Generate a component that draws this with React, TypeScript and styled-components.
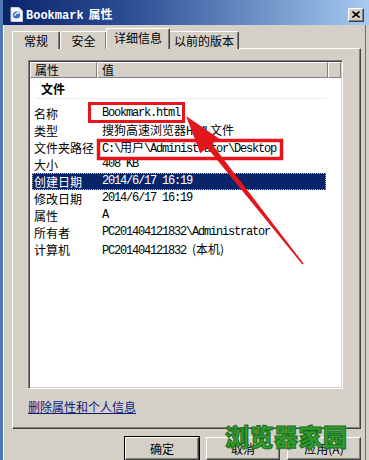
import React from "react";
import styled, { createGlobalStyle, css } from "styled-components";

const GlobalStyle = createGlobalStyle`
  html, body { margin: 0; padding: 0; background: #d4d0c8; }
  * { box-sizing: border-box; }
`;

const CJK = `"Noto Sans CJK SC", "Noto Sans CJK JP", sans-serif`;
const MONO = `"Liberation Mono", "Noto Sans CJK SC", monospace`;

const Frame = styled.div`
  position: relative;
  width: 369px;
  height: 460px;
  overflow: hidden;
  background: #d4d0c8;
  border-left: 3px solid #4e78b2;
  box-shadow: inset 1px 0 0 #ffffff, inset -3px 0 0 #d4d0c8, inset -4px 0 0 #6e6e6e;
  display: flex;
  flex-direction: column;
  font-family: ${CJK};
  font-size: 12px;
  color: #000;
`;

const TitleBar = styled.div`
  height: 27px;
  padding: 4px 5px 0 7px;
  display: flex;
  align-items: center;
  gap: 3px;
  background: linear-gradient(90deg, #0a246a 0%, #2c4f95 35%, #a6caf0 100%);
  color: #fff;
  position: relative;
  z-index: 1;
`;

const TitleText = styled.div`
  flex: 1;
  font-weight: bold;
  white-space: nowrap;
  line-height: 14px;
`;

const TitleLatin = styled.span`
  font-family: ${MONO};
  font-size: 12px;
  font-weight: bold;
`;

const TitleCjk = styled.span`
  font-family: ${CJK};
  font-size: 12px;
  font-weight: bold;
  margin-left: 5px;
`;

const CloseBtn = styled.div`
  width: 16px;
  height: 14px;
  background: #d4d0c8;
  border-top: 1px solid #fff;
  border-left: 1px solid #fff;
  border-right: 1px solid #404040;
  border-bottom: 1px solid #404040;
  box-shadow: inset -1px -1px 0 #808080;
  display: flex;
  align-items: center;
  justify-content: center;
`;

const Body = styled.div`
  flex: 1;
  display: flex;
  flex-direction: column;
  padding: 4px 8px 0 9px;
`;

const TabStrip = styled.div`
  height: 20px;
  display: flex;
  align-items: flex-end;
  position: relative;
  z-index: 1;
  margin-bottom: -1px;
`;

const Tab = styled.div<{ $active?: boolean; $w: number }>`
  width: ${(p) => p.$w}px;
  height: ${(p) => (p.$active ? 21 : 18)}px;
  margin-left: ${(p) => (p.$active ? -1 : 0)}px;
  margin-right: ${(p) => (p.$active ? -1 : 0)}px;
  background: #d4d0c8;
  border-top: 1px solid #fff;
  border-left: 1px solid #fff;
  border-right: 1px solid #404040;
  box-shadow: inset -1px 0 0 #808080;
  border-radius: 2px 2px 0 0;
  display: flex;
  align-items: center;
  justify-content: center;
  font-size: 12px;
  line-height: 14px;
  padding-bottom: ${(p) => (p.$active ? 3 : 0)}px;
  position: relative;
  z-index: ${(p) => (p.$active ? 2 : 1)};
`;

const Panel = styled.div`
  width: 349px;
  height: 381px;
  border-top: 1px solid #fff;
  border-left: 1px solid #fff;
  border-right: 1px solid #404040;
  border-bottom: 1px solid #404040;
  box-shadow: inset -1px -1px 0 #808080;
  padding: 11px 0 0 15px;
  display: flex;
  flex-direction: column;
`;

const ListBox = styled.div`
  width: 315px;
  height: 329px;
  background: #fff;
  border-top: 1px solid #808080;
  border-left: 1px solid #808080;
  border-right: 1px solid #fff;
  border-bottom: 1px solid #fff;
  box-shadow: inset 1px 1px 0 #404040, inset -1px -1px 0 #d4d0c8;
  padding: 1px;
  display: flex;
  flex-direction: column;
`;

const HeaderRow = styled.div`
  height: 16px;
  display: flex;
  background: #d4d0c8;
`;

const HeaderCell = styled.div<{ $w?: number }>`
  ${(p) =>
    p.$w
      ? css`
          width: ${p.$w}px;
        `
      : css`
          flex: 1;
        `}
  height: 16px;
  border-top: 1px solid #fff;
  border-left: 1px solid #fff;
  border-right: 1px solid #808080;
  border-bottom: 1px solid #808080;
  padding-left: 4px;
  font-size: 12px;
  line-height: 14px;
  white-space: nowrap;
`;

const GroupHeader = styled.div`
  height: 21px;
  margin: 0 14px 6px 5px;
  padding-left: 6px;
  display: flex;
  align-items: center;
  font-weight: bold;
  font-size: 12px;
  border-bottom: 1px solid #ecece8;
`;

const Row = styled.div<{ $selected?: boolean }>`
  width: 294px;
  height: 17px;
  margin-left: 2px;
  padding-left: 2px;
  display: flex;
  align-items: center;
  white-space: nowrap;
  ${(p) =>
    p.$selected &&
    css`
      background: #0a246a;
      color: #fff;
      outline: 1px dotted #c8b68a;
      outline-offset: -1px;
    `}
`;

const Label = styled.div`
  width: 68px;
  font-size: 12px;
  line-height: 17px;
`;

const Value = styled.div`
  font-family: ${MONO};
  font-size: 12px;
  letter-spacing: -1.2px;
  line-height: 17px;
`;

const Han = styled.span`
  font-family: ${CJK};
  font-size: 12px;
  letter-spacing: 0;
`;

const Link = styled.a`
  margin-top: 10px;
  width: fit-content;
  font-size: 12px;
  line-height: 16px;
  color: #0b1a7a;
  text-decoration: underline;
  cursor: pointer;
`;

const ButtonRow = styled.div`
  display: flex;
  justify-content: flex-end;
  gap: 7px;
  margin-top: 8px;
  width: 349px;
`;

const Button = styled.div`
  width: 74px;
  height: 23px;
  background: #d4d0c8;
  border-top: 1px solid #fff;
  border-left: 1px solid #fff;
  border-right: 1px solid #404040;
  border-bottom: 1px solid #404040;
  box-shadow: inset -1px -1px 0 #808080;
  display: flex;
  align-items: center;
  justify-content: center;
  font-size: 12px;
`;

const DefaultButton = styled(Button)`
  outline: 1px solid #000;
`;

const Overlay = styled.svg`
  position: absolute;
  left: -3px;
  top: 0;
  pointer-events: none;
`;

const Watermark = styled.div`
  position: absolute;
  left: 222px;
  top: 418px;
  font-family: ${CJK};
  font-size: 24px;
  font-weight: 900;
  letter-spacing: 0.5px;
  color: #2f9e2c;
  -webkit-text-stroke: 1px #1d6e1f;
  text-shadow: 0 0 1px #9fd79a;
  white-space: nowrap;
`;

const DocIcon = () => (
  <svg width="13" height="15" viewBox="0 0 13 15">
    <path d="M1 0.5 H9 L12.5 4 V14.5 H1 Z" fill="#f4f6fb" stroke="#c8d0e0" />
    <circle cx="6.5" cy="8" r="3.6" fill="#3d6fc4" />
    <path d="M4.6 8.6 Q6.5 5 8.8 6.4" stroke="#fff" strokeWidth="1.3" fill="none" />
  </svg>
);

type Item = { label: string; value: React.ReactNode; selected?: boolean };

const items: Item[] = [
  { label: "名称", value: "Bookmark.html" },
  {
    label: "类型",
    value: (
      <>
        <Han>搜狗高速浏览器</Han>HTML<Han>文件</Han>
      </>
    ),
  },
  {
    label: "文件夹路径",
    value: (
      <>
        C:\<Han>用户</Han>\Administrator\Desktop
      </>
    ),
  },
  { label: "大小", value: "408 KB" },
  { label: "创建日期", value: "2014/6/17 16:19", selected: true },
  { label: "修改日期", value: "2014/6/17 16:19" },
  { label: "属性", value: "A" },
  { label: "所有者", value: "PC201404121832\\Administrator" },
  {
    label: "计算机",
    value: (
      <>
        PC201404121832 <Han>(本机)</Han>
      </>
    ),
  },
];

const tip = { x: 186, y: 116 };
const tail = { x: 303, y: 264 };
const dx = tail.x - tip.x;
const dy = tail.y - tip.y;
const len = Math.hypot(dx, dy);
const ux = dx / len;
const uy = dy / len;
const nx = -uy;
const ny = ux;
const headLen = 38;
const headHalf = 12;
const shaftHalf = 3;
const tailHalf = 0.8;
const bx = tip.x + headLen * ux;
const by = tip.y + headLen * uy;
const pt = (x: number, y: number) => `${x.toFixed(1)},${y.toFixed(1)}`;
const arrowPoints = [
  pt(tip.x, tip.y),
  pt(bx + headHalf * nx, by + headHalf * ny),
  pt(bx + shaftHalf * nx, by + shaftHalf * ny),
  pt(tail.x + tailHalf * nx, tail.y + tailHalf * ny),
  pt(tail.x - tailHalf * nx, tail.y - tailHalf * ny),
  pt(bx - shaftHalf * nx, by - shaftHalf * ny),
  pt(bx - headHalf * nx, by - headHalf * ny),
].join(" ");

export default function App() {
  return (
    <>
      <GlobalStyle />
      <Frame>
        <TitleBar>
          <DocIcon />
          <TitleText>
            <TitleLatin>Bookmark</TitleLatin>
            <TitleCjk>属性</TitleCjk>
          </TitleText>
          <CloseBtn>
            <svg width="8" height="7" viewBox="0 0 8 7">
              <path d="M0.5 0.5 L7.5 6.5 M7.5 0.5 L0.5 6.5" stroke="#000" strokeWidth="1.6" />
            </svg>
          </CloseBtn>
        </TitleBar>
        <Body>
          <TabStrip>
            <Tab $w={48}>常规</Tab>
            <Tab $w={47}>安全</Tab>
            <Tab $w={64} $active>
              详细信息
            </Tab>
            <Tab $w={70}>以前的版本</Tab>
          </TabStrip>
          <Panel>
            <ListBox>
              <HeaderRow>
                <HeaderCell $w={67}>属性</HeaderCell>
                <HeaderCell $w={231}>值</HeaderCell>
                <HeaderCell />
              </HeaderRow>
              <GroupHeader>文件</GroupHeader>
              {items.map((it) => (
                <Row key={it.label} $selected={it.selected}>
                  <Label>{it.label}</Label>
                  <Value>{it.value}</Value>
                </Row>
              ))}
            </ListBox>
            <Link>删除属性和个人信息</Link>
          </Panel>
          <ButtonRow>
            <DefaultButton>确定</DefaultButton>
            <Button>取消</Button>
            <Button>应用(A)</Button>
          </ButtonRow>
        </Body>
        <Overlay width="369" height="460" viewBox="0 0 369 460">
          <rect x="89.5" y="103.5" width="94" height="18" fill="none" stroke="#e8141c" strokeWidth="3" />
          <rect x="98.5" y="140.5" width="183" height="18" fill="none" stroke="#e8141c" strokeWidth="3.5" />
          <polygon points={arrowPoints} fill="#e3161b" />
        </Overlay>
        <Watermark>浏览器家园</Watermark>
      </Frame>
    </>
  );
}
